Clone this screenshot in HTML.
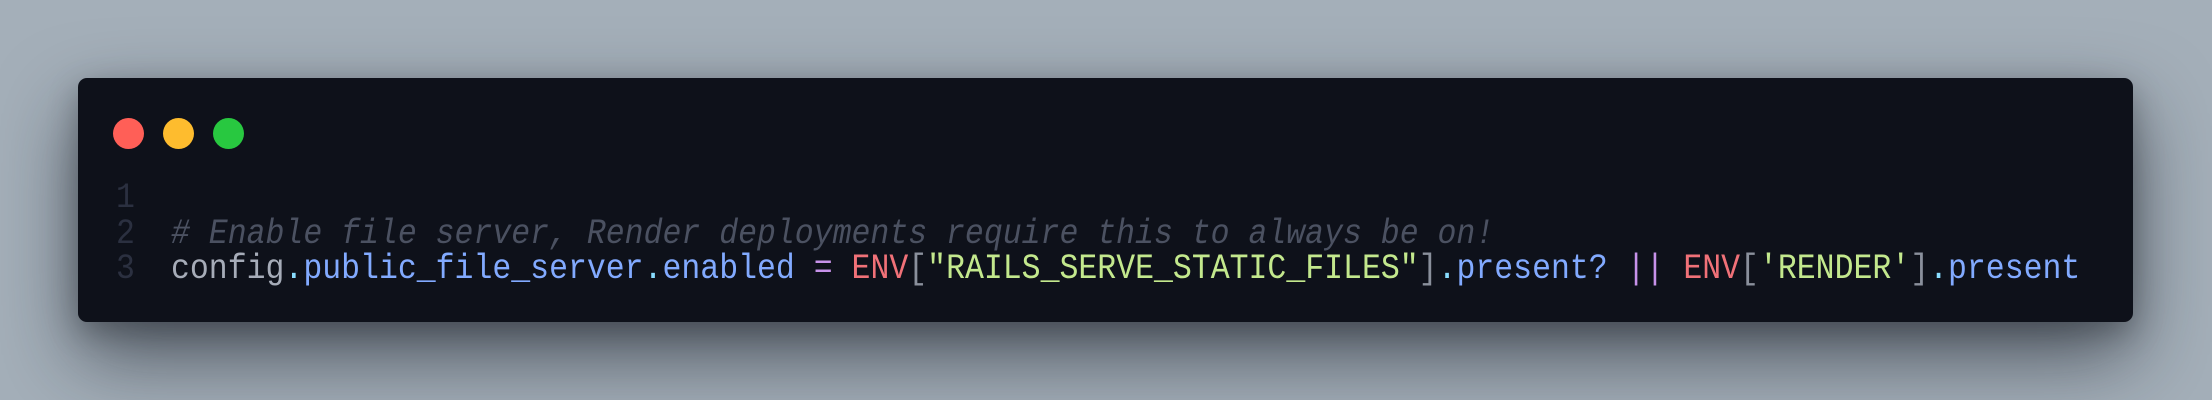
<!DOCTYPE html>
<html><head><meta charset="utf-8"><style>
html,body{margin:0;padding:0;}
body{width:2212px;height:400px;background:#a4afb9;position:relative;overflow:hidden;font-family:"Liberation Mono",monospace;}
.win{position:absolute;left:78px;top:78px;width:2055px;height:244px;background:#0e111a;border-radius:9px;box-shadow:0 34px 80px rgba(20,25,35,0.6),0 10px 30px rgba(0,0,0,0.25);}
.dot{position:absolute;top:118px;width:31px;height:31px;border-radius:50%;}
.line{position:absolute;left:0;font-size:31.5px;white-space:pre;line-height:35px;transform:scaleY(1.12);transform-origin:0 50%;}
.ln{position:absolute;left:116px;color:#2b3040;}
.code{position:absolute;left:171px;}
.c{color:#4b5161;font-style:italic}
.g{color:#a6acb8}.b{color:#82aaff}.cy{color:#89ddff}.p{color:#c792ea}.r{color:#f07178}.s{color:#c3e88d}.br{color:#8a909c}
</style></head><body>
<div class="win"></div>
<div class="dot" style="left:113px;background:#ff5f57"></div>
<div class="dot" style="left:163px;background:#febc2e"></div>
<div class="dot" style="left:213px;background:#28c840"></div>
<div class="line" style="top:179px"><span class="ln">1</span></div>
<div class="line" style="top:215px"><span class="ln">2</span><span class="code c"># Enable file server, Render deployments require this to always be on!</span></div>
<div class="line" style="top:250px"><span class="ln">3</span><span class="code"><span class="g">config</span><span class="cy">.</span><span class="b">public_file_server</span><span class="cy">.</span><span class="b">enabled</span> <span class="p">=</span> <span class="r">ENV</span><span class="br">[</span><span class="s">"RAILS_SERVE_STATIC_FILES"</span><span class="br">]</span><span class="cy">.</span><span class="b">present?</span> <span class="p">||</span> <span class="r">ENV</span><span class="br">[</span><span class="s">'RENDER'</span><span class="br">]</span><span class="cy">.</span><span class="b">present</span></span></div>
</body></html>
